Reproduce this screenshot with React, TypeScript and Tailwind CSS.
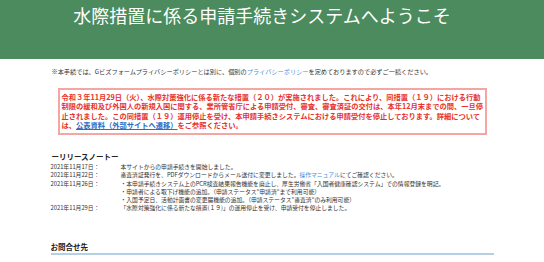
const notes: { date: string; lines: React.ReactNode[] }[] = [
  { date: '2021年11月17日：', lines: ['本サイトからの申請手続きを開始しました。'] },
  {
    date: '2021年11月22日：',
    lines: [
      <>
        審査済証発行を、PDFダウンロードからメール送付に変更しました。
        <a className="text-[#4a8fdc]">操作マニュアル</a>にてご確認ください。
      </>,
    ],
  },
  {
    date: '2021年11月26日：',
    lines: [
      '・本申請手続きシステム上のPCR検査結果報告機能を廃止し、厚生労働省「入国者健康確認システム」での情報登録を明記。',
      '・申請者による取下げ機能の追加。（申請ステータス"申請済"まで利用可能）',
      '・入国予定日、活動計画書の変更届機能の追加。（申請ステータス"審査済"のみ利用可能）',
    ],
  },
  {
    date: '2021年11月29日：',
    lines: ['「水際対策強化に係る新たな措置(１９)」の運用停止を受け、申請受付を停止しました。'],
  },
];

export default function App() {
  return (
    <div className="h-[262px] w-[544px] overflow-hidden bg-white font-['Noto_Sans_CJK_JP','Noto_Sans',sans-serif] text-[#333]">
      {/* header */}
      <header className="h-[59px] bg-[#4b8b5d] pt-[4px] pr-[20px] text-center text-[18px] leading-[22px] text-white">
        水際措置に係る申請手続きシステムへようこそ
      </header>

      <main className="mx-auto w-[443px]">
        <p className="mt-[9px] whitespace-nowrap pl-[1px] text-[6.2px] leading-[8px]">
          ※本手続では、Gビズフォームプライバシーポリシーとは別に、個別の
          <a className="text-[#4a8fdc]">プライバシーポリシー</a>
          を定めておりますので必ずご一読ください。
        </p>

        {/* notice box */}
        <div className="mx-[7px] mt-[12px] whitespace-nowrap border-2 border-[#f5a5a2] px-[2px] py-[3px] text-[7.25px] font-bold leading-[9.3px] text-[#e8312b]">
          令和３年11月29日（火）、水際対策強化に係る新たな措置（２０）が実施されました。これにより、同措置（１９）における行動
          <br />
          制限の緩和及び外国人の新規入国に関する、業所管省庁による申請受付、審査、審査済証の交付は、本年12月末までの間、一旦停
          <br />
          止されました。この同措置（１９）運用停止を受け、本申請手続きシステムにおける申請受付を停止しております。詳細について
          <br />
          は、<a className="text-[#2b6cc4] underline">公表資料（外部サイトへ遷移）</a>をご参照ください。
        </div>

        <h2 className="mt-[17px] pl-[1px] text-[7.5px] font-bold leading-[9px] text-[#222]">ーリリースノートー</h2>

        <div className="mt-[2px] flex flex-col whitespace-nowrap text-[5.8px] leading-[8.2px]">
          {notes.map((n) => (
            <div key={n.date} className="flex">
              <div className="w-[70px] shrink-0">{n.date}</div>
              <div className="flex flex-col">
                {n.lines.map((l, i) => (
                  <div key={i}>{l}</div>
                ))}
              </div>
            </div>
          ))}
        </div>

        <h2 className="mt-[30px] border-b-2 border-[#b3d0e6] pb-[1px] text-[7.5px] font-bold leading-[10px] text-[#222]">
          お問合せ先
        </h2>
      </main>
    </div>
  );
}
